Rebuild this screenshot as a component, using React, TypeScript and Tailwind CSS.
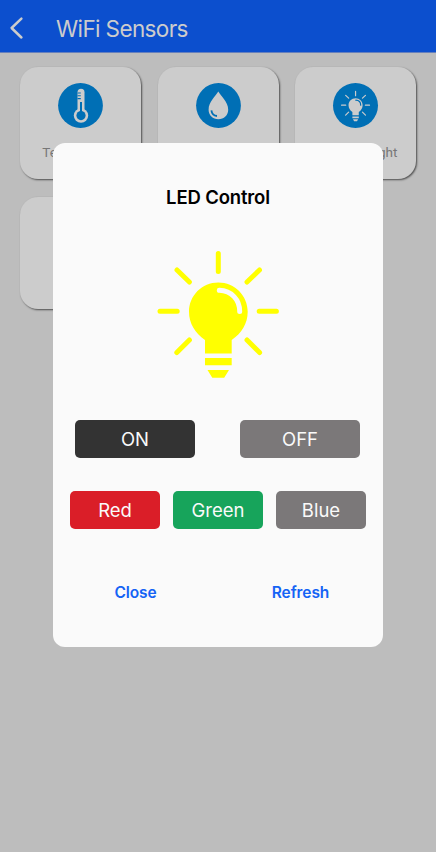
import React from "react";

function Bulb({ className, color, shine }: { className: string; color: string; shine: string }) {
  return (
    <svg className={className} viewBox="0 0 146 145" fill="none">
      <g stroke={color} strokeWidth="5" strokeLinecap="round">
        <path d="M73.3 13.6V31.4M15 71.3H32.2M114.2 71.3H131.4M32 30L44.4 42M114.5 30L102 42M44.4 100L31.8 112.6M102 100L114.6 112.6" />
      </g>
      <path
        fill={color}
        d="M73.3 42.5C89.8 42.5 102.7 55.6 102.7 71.8C102.7 83.5 96.6 93.5 86.7 100V113.5H60V100C50 93 44 83.5 44 71.8C44 55.6 57 42.5 73.3 42.5ZM60 118H86.7V125.3H60ZM62.5 130H84L79.2 137.8H67.3Z"
      />
      <path d="M74.3 50.3C86.5 50.7 94.7 59.7 94.7 71.5" stroke={shine} strokeWidth="5" strokeLinecap="round" />
    </svg>
  );
}

function Thermometer() {
  return (
    <svg className="h-[45px] w-[45px]" viewBox="0 0 45 45" fill="none">
      <circle cx="22.5" cy="22.5" r="22.4" fill="#006fb5" />
      <path d="M19.5 28V9.3a3.5 3.5 0 0 1 7 0V28Z" fill="#ccc" />
      <circle cx="23" cy="32.6" r="7.2" fill="#ccc" />
      <circle cx="23" cy="32.6" r="4.6" fill="#006fb5" />
      <path d="M23 31V19" stroke="#006fb5" strokeWidth="2" />
      <path d="M19.5 10h3.3M19.5 12.8h3.3M19.5 15.6h3.3" stroke="#006fb5" strokeWidth="1.1" />
    </svg>
  );
}

function Drop() {
  return (
    <svg className="h-[45px] w-[45px]" viewBox="0 0 45 45" fill="none">
      <circle cx="22.5" cy="22.5" r="22.4" fill="#006fb5" />
      <path d="M22.3 8.6C25 13.4 32.2 19 32.2 26.7C32.2 32.2 28 36.2 22.4 36.2C16.8 36.2 12.6 32.2 12.6 26.7C12.6 19 19.5 13.4 22.3 8.6Z" fill="#ccc" />
      <path d="M15.4 27.3C15.8 30.5 17.7 32.6 21 33" stroke="#006fb5" strokeWidth="1.8" />
    </svg>
  );
}

function LightIcon() {
  return (
    <div className="flex h-[45px] w-[45px] items-center justify-center rounded-full bg-[#006fb5]">
      <Bulb className="h-[35px] w-[35px]" color="#ccc" shine="#006fb5" />
    </div>
  );
}

function Card({ children, label }: { children?: React.ReactNode; label?: string }) {
  return (
    <div className="flex h-[112px] w-[121px] flex-col items-center rounded-[18px] bg-[#ccc] pt-4 shadow-[1px_1px_2px_rgba(0,0,0,0.6)]">
      {children}
      <span className="mt-[14px] whitespace-nowrap font-[Roboto,sans-serif] text-[13.5px] leading-5 text-[#777]">{label}</span>
    </div>
  );
}

function Action({ children, className }: { children: string; className: string }) {
  return (
    <button className={`h-[38px] rounded-[5px] text-[18.5px] leading-none text-[#fafafa] ${className}`}>
      {children}
    </button>
  );
}

export default function App() {
  return (
    <div className="relative h-[852px] w-[436px] overflow-hidden bg-[#bdbdbd] font-[Inter,sans-serif]">
      <header className="flex h-[53px] items-center border-b border-[#6680bd] bg-[#0c4fce] pt-[4px]">
        <svg className="ml-[9px] h-6 w-4" viewBox="0 0 16 24" fill="none">
          <path d="M12.4 2.7L2.6 12L12.4 21.5" stroke="#ccc" strokeWidth="2.5" strokeLinecap="round" strokeLinejoin="round" />
        </svg>
        <h1 className="ml-[31px] pt-px text-[22.5px] font-normal tracking-[-0.62px] text-[#ccc]">WiFi Sensors</h1>
      </header>
      <main className="grid grid-cols-[121px_121px_121px] gap-x-[16.5px] gap-y-[18px] pl-5 pt-[14px]">
        <Card label="Temperature"><Thermometer /></Card>
        <Card><Drop /></Card>
        <Card label="Ambient Light"><LightIcon /></Card>
        <Card />
      </main>
      <section className="absolute left-[53px] top-[143px] flex h-[504px] w-[330px] flex-col items-center rounded-[12px] bg-[#fafafa]">
        <h2 className="mt-[42px] text-[18.5px] font-semibold leading-6 tracking-[-0.15px] text-black">LED Control</h2>
        <Bulb className="mt-[31px] h-[145px] w-[146px]" color="#ffff00" shine="#fafafa" />
        <div className="mr-px mt-[35px] flex gap-[45px]">
          <Action className="w-[120px] bg-[#333]">ON</Action>
          <Action className="w-[120px] bg-[#7b7879]">OFF</Action>
        </div>
        <div className="mt-[33px] flex gap-[13px]">
          <Action className="w-[90px] bg-[#da1e28]">Red</Action>
          <Action className="w-[90px] bg-[#17a45b]">Green</Action>
          <Action className="w-[90px] bg-[#7b7879]">Blue</Action>
        </div>
        <div className="mt-[52px] grid w-full grid-cols-2 text-center text-[15.5px] font-semibold leading-6 tracking-[-0.1px] text-[#1463f5]">
          <button>Close</button>
          <button>Refresh</button>
        </div>
      </section>
    </div>
  );
}
